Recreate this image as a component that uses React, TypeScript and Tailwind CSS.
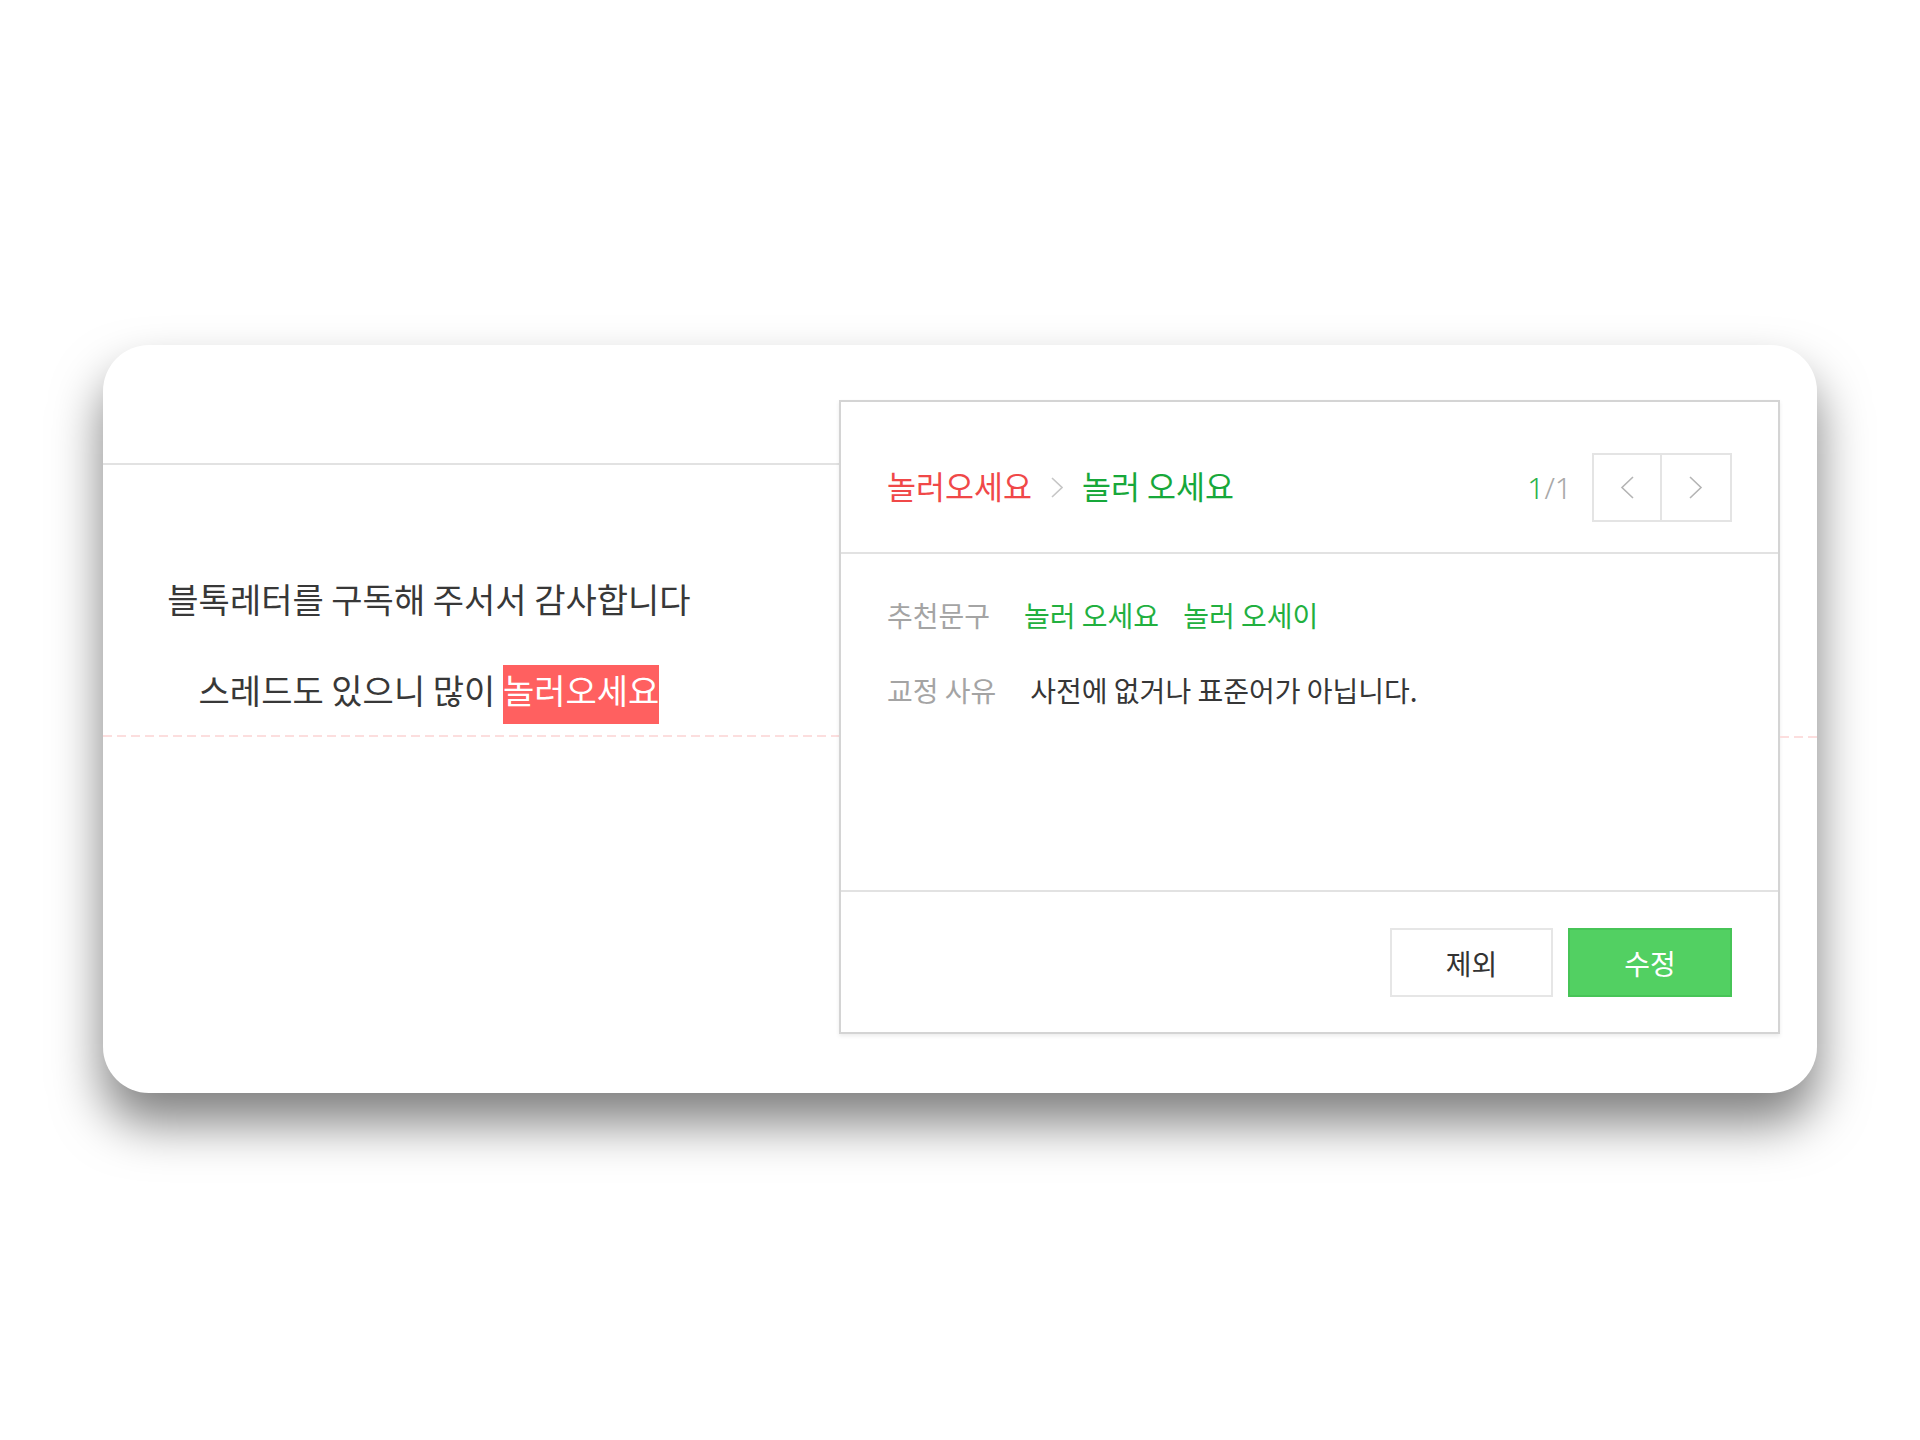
import React from "react";

const KR = "font-['Noto_Sans_CJK_KR','Noto_Sans',sans-serif]";

function Dashed() {
  return (
    <div className="h-[2px] w-full bg-[repeating-linear-gradient(to_right,#fcdede_0px,#fcdede_9px,transparent_9px,transparent_14px)]" />
  );
}

export default function App() {
  return (
    <div className={`min-h-[1440px] w-[1920px] bg-white pt-[345px] pl-[103px] ${KR}`}>
      <div className="flex h-[748px] w-[1714px] rounded-[46px] bg-white shadow-[0_30px_50px_rgba(0,0,0,0.5)]">
        {/* left column */}
        <div className="flex w-[736px] flex-col">
          <div className="h-[118px]" />
          <div className="h-[2px] w-full bg-[#e2e2e2]" />
          <div className="w-[652px] pt-[105px] text-center text-[34px] text-[#383838]">
            <div className="h-[57px] leading-[57px]">블톡레터를 구독해 주서서 감사합니다</div>
            <div className="mt-[34px] h-[57px] leading-[57px]">
              스레드도 있으니 많이{" "}
              <span className="inline-block bg-[#ff6060] pb-[9px] leading-[50px] text-white">놀러오세요</span>
            </div>
          </div>
          <div className="mt-[17px]">
            <Dashed />
          </div>
        </div>

        {/* panel */}
        <div className="mt-[55px] flex h-[634px] w-[941px] flex-col border-2 border-[#d4d4d4] bg-white shadow-[0_2px_4px_rgba(0,0,0,0.08)]">
          <div className="flex h-[150px] items-center justify-between px-[46px] pt-[21px]">
            <div className="-mt-[4px] flex items-center text-[31.5px]">
              <span className="text-[#f04848]">놀러오세요</span>
              <svg className="mx-[19px] mt-[4px]" width="12" height="21" viewBox="0 0 12 21" fill="none">
                <polyline points="1,1 11,10.5 1,20" stroke="#c6c6c6" strokeWidth="1.6" />
              </svg>
              <span className="text-[#17a83a]">놀러 오세요</span>
            </div>
            <div className="flex items-center">
              <span className="mr-[20px] font-['Noto_Sans',sans-serif] text-[30px] font-light">
                <span className="text-[#2bb24c]">1</span>
                <span className="text-[#a8a8a8]">/1</span>
              </span>
              <div className="flex">
                <button className="flex h-[69px] w-[70px] items-center justify-center border-2 border-[#e4e4e4] bg-white">
                  <svg width="14" height="23" viewBox="0 0 14 23" fill="none">
                    <polyline points="13,1 2,11.5 13,22" stroke="#b4b4b4" strokeWidth="1.6" />
                  </svg>
                </button>
                <button className="flex h-[69px] w-[70px] items-center justify-center border-2 border-l-0 border-[#e4e4e4] bg-white">
                  <svg width="14" height="23" viewBox="0 0 14 23" fill="none">
                    <polyline points="1,1 12,11.5 1,22" stroke="#b4b4b4" strokeWidth="1.6" />
                  </svg>
                </button>
              </div>
            </div>
          </div>
          <div className="h-[2px] w-full bg-[#e2e2e2]" />
          <div className="flex h-[336px] flex-col gap-[35px] pl-[46px] pt-[41px] text-[28px] leading-[40px]">
            <div className="flex gap-[34px]">
              <span className="text-[#a4a4a4]">추천문구</span>
              <div className="flex gap-[24px] text-[#22b03f]">
                <span>놀러 오세요</span>
                <span>놀러 오세이</span>
              </div>
            </div>
            <div className="flex gap-[34px]">
              <span className="text-[#a4a4a4]">교정 사유</span>
              <span className="text-[#363636]">사전에 없거나 표준어가 아닙니다.</span>
            </div>
          </div>
          <div className="h-[2px] w-full bg-[#e2e2e2]" />
          <div className="flex flex-1 items-start justify-end gap-[15px] pr-[46px] pt-[36px]">
            <button className="flex h-[69px] w-[163px] items-center justify-center border-2 border-[#e6e6e6] bg-white text-[28px] text-[#333333]">
              제외
            </button>
            <button className="flex h-[69px] w-[164px] items-center justify-center border-2 border-[#47c457] bg-[#52d062] text-[28px] text-white">
              수정
            </button>
          </div>
        </div>

        {/* right gutter */}
        <div className="flex w-[37px] flex-col pt-[391px]">
          <Dashed />
        </div>
      </div>
    </div>
  );
}
